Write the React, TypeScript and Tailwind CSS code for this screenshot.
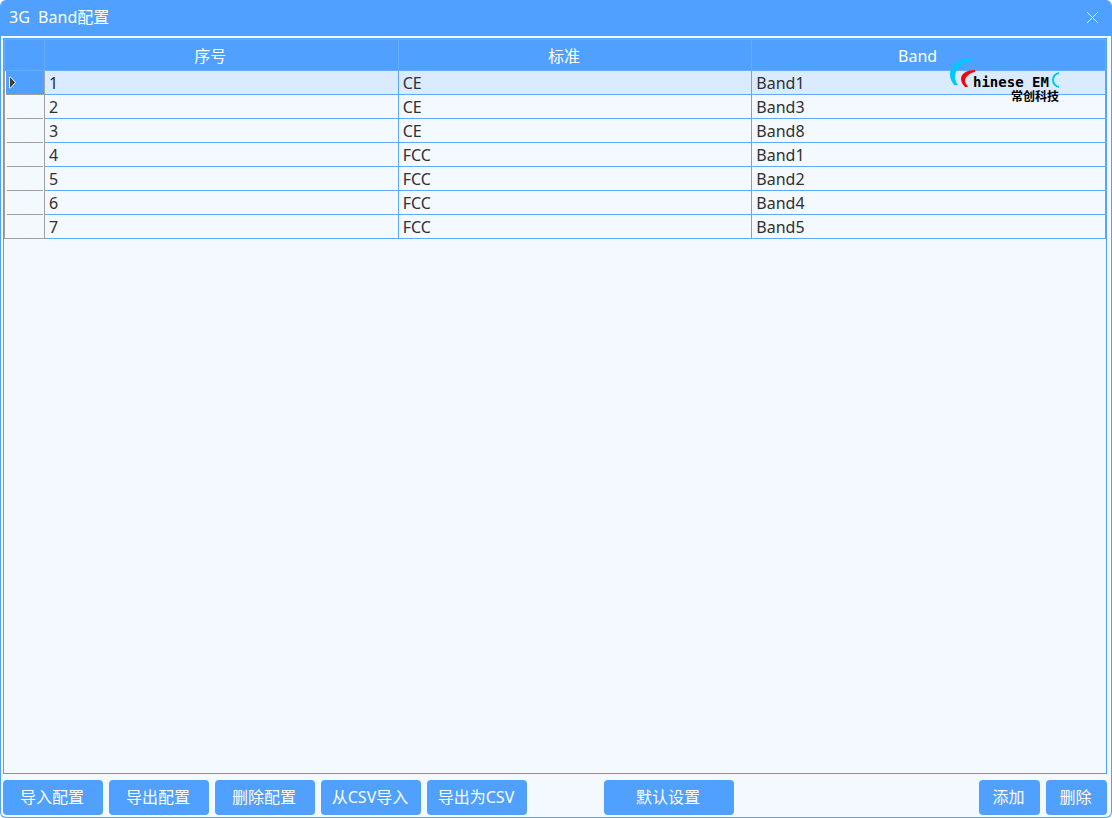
import { useState } from "react"
import type { ReactNode } from "react"
import clsx from "clsx"

interface BandRow {
  id: number
  standard: string
  band: string
}

const rows: BandRow[] = [
  { id: 1, standard: "CE", band: "Band1" },
  { id: 2, standard: "CE", band: "Band3" },
  { id: 3, standard: "CE", band: "Band8" },
  { id: 4, standard: "FCC", band: "Band1" },
  { id: 5, standard: "FCC", band: "Band2" },
  { id: 6, standard: "FCC", band: "Band4" },
  { id: 7, standard: "FCC", band: "Band5" },
]

const columns = ["序号", "标准", "Band"]

const fileActions = ["导入配置", "导出配置", "删除配置", "从CSV导入", "导出为CSV"]

function ActionButton({ className, children }: { className?: string; children: ReactNode }) {
  return (
    <button
      type="button"
      className={clsx(
        "h-[35px] shrink-0 rounded bg-[#50a0ff] pr-0.5 pb-0.5 text-white whitespace-nowrap hover:bg-[#73b3ff] active:bg-[#4080cc]",
        className,
      )}
    >
      {children}
    </button>
  )
}

function Logo() {
  return (
    <svg
      className="pointer-events-none absolute top-[19px] right-[41px]"
      width="116"
      height="50"
      viewBox="0 0 116 50"
      role="img"
      aria-label="Chinese EMC 常创科技"
    >
      <path d="M23 0C10 0 1 8 1 17c0 4 2 7 4 10h4c-2-3-3-5-3-8C6 11 13 4 23 3z" fill="#00c8ff" />
      <path d="M26 12C17 12 12 16 12 21c0 3 2 6 4 8h3c-1-2-3-4-3-6 0-4 4-8 10-9z" fill="#ff0000" />
      <path d="M110 15c-4 1-6 4-6 7s2 6 6 7" fill="none" stroke="#00c8ff" strokeWidth="2" />
      <text x="24" y="29" fontSize="14" fontWeight="700" fontFamily="'DejaVu Sans Mono', monospace">
        hinese EM
      </text>
      <text x="62" y="43" fontSize="12" fontWeight="700" fontFamily="'Noto Sans CJK SC', sans-serif">
        常创科技
      </text>
    </svg>
  )
}

export default function App() {
  const [selected, setSelected] = useState(1)

  return (
    <div className="flex h-screen flex-col overflow-hidden rounded-md border border-t-0 border-[#50a0ff] bg-[#f3f9ff] font-['Noto_Sans','Noto_Sans_CJK_SC',sans-serif] text-base text-[#303030]">
      <header className="flex h-9 shrink-0 items-center justify-between bg-[#50a0ff] pr-[11px] pb-0.5 pl-2 text-white">
        <h1 className="whitespace-pre">{"3G  Band配置"}</h1>
        <button type="button" aria-label="关闭" className="p-px">
          <svg width="13" height="13" viewBox="0 0 13 13" stroke="currentColor" shapeRendering="crispEdges">
            <path d="M1 1l11 11M12 1L1 12" />
          </svg>
        </button>
      </header>

      <main className="relative mt-0.5 mr-1 ml-0.5 flex-1 border border-[#50a0ff]">
        <table className="w-full table-fixed border-separate border-spacing-0">
          <colgroup>
            <col className="w-[41px]" />
            <col />
            <col />
            <col />
          </colgroup>
          <thead>
            <tr className="h-8 bg-[#50a0ff] text-white">
              <td className="border border-[#68acff] p-0" />
              {columns.map((name) => (
                <th
                  key={name}
                  scope="col"
                  className="border-y border-r border-[#68acff] pt-0.5 pr-[22px] pb-0 pl-0 font-normal"
                >
                  {name}
                </th>
              ))}
            </tr>
          </thead>
          <tbody>
            {rows.map((row) => {
              const active = row.id === selected
              const last = row.id === rows.length
              return (
                <tr
                  key={row.id}
                  className={clsx("h-6 leading-[21px]", active && "bg-[#dbebff]")}
                  onClick={() => setSelected(row.id)}
                >
                  <th scope="row" className={clsx("border-x border-[#a0a0a0] bg-[#f3f9ff] p-0", last && "border-b")}>
                    <div
                      className={clsx(
                        "flex items-center",
                        active ? "ml-px bg-[#50a0ff] pl-0.5" : "mr-px ml-0.5",
                        last ? "h-[23px]" : "h-6 border-b border-[#a0a0a0]",
                      )}
                    >
                      {active && (
                        <svg width="9" height="13" viewBox="0 0 9 13">
                          <path d="M1.5 1v11h1l5-5.5-5-5.5z" fill="#404040" stroke="#e8f3ff" />
                        </svg>
                      )}
                    </div>
                  </th>
                  <td className="border-r border-b border-[#60a8ff] px-1 pt-0.5 pb-0">{row.id}</td>
                  <td className="border-r border-b border-[#60a8ff] px-1 pt-0.5 pb-0">{row.standard}</td>
                  <td className="border-r border-b border-[#60a8ff] px-1 pt-0.5 pb-0">{row.band}</td>
                </tr>
              )
            })}
          </tbody>
        </table>
        <Logo />
      </main>

      <footer className="flex shrink-0 gap-1.5 pt-1.5 pr-1 pb-0.5 pl-0.5">
        {fileActions.map((label) => (
          <ActionButton key={label} className="w-[100px]">
            {label}
          </ActionButton>
        ))}
        <ActionButton className="ml-[71px] w-[130px]">默认设置</ActionButton>
        <div className="ml-auto flex gap-1.5">
          <ActionButton className="w-[61px]">添加</ActionButton>
          <ActionButton className="w-[61px]">删除</ActionButton>
        </div>
      </footer>
    </div>
  )
}
